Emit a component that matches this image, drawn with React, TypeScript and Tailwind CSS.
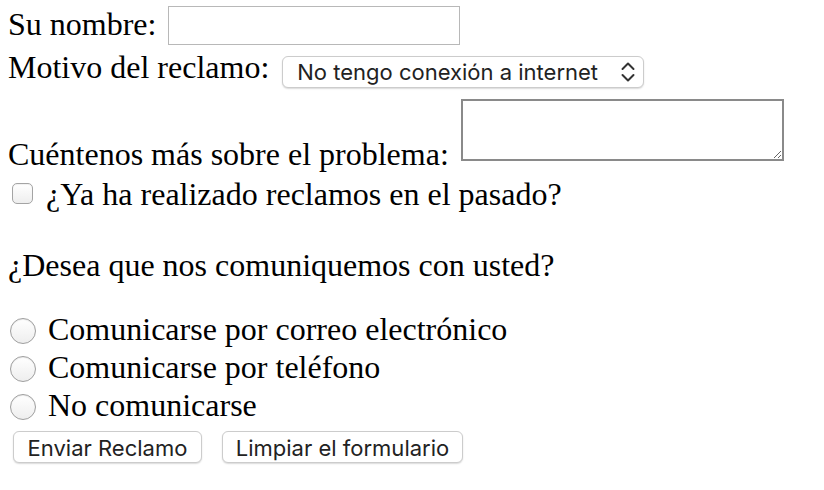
import React from "react";

const serif = "font-['Liberation_Serif','Times_New_Roman',serif] text-[32px] leading-[38px] text-black";
const sans = "font-['Inter','Liberation_Sans',sans-serif] text-[22px] text-[#222]";

function Radio({ label }: { label: string }) {
  return (
    <label className="flex items-start gap-[12px] h-[38px] pl-[2px]">
      <span
        role="radio"
        aria-checked="false"
        className="block mt-[10px] w-[26px] h-[26px] shrink-0 rounded-full border-[1.5px] border-[#9e9e9e] bg-gradient-to-b from-white to-[#eeeeee] shadow-[inset_0_1px_1px_rgba(0,0,0,0.08)]"
      />
      <span className={`${serif} mt-[2px]`}>{label}</span>
    </label>
  );
}

export default function App() {
  return (
    <form className="bg-white w-[824px] h-[490px] pl-[8px] flex flex-col">
      {/* Nombre */}
      <label className="flex items-start gap-[12px] h-[48px]">
        <span className={`${serif} mt-[5px]`}>Su nombre:</span>
        <input
          type="text"
          className="mt-[6px] w-[292px] h-[39px] border border-[#b8b8b8] bg-white outline-none"
        />
      </label>

      {/* Motivo */}
      <label className="flex items-start gap-[13px] h-[48px]">
        <span className={serif}>Motivo del reclamo:</span>
        <div className="mt-[8px] w-[362px] h-[32px] flex items-center justify-between pl-[14px] pr-[7px] bg-white border border-[#cccccc] rounded-[6px] shadow-[0_1px_1.5px_rgba(0,0,0,0.15)]">
          <span className={sans}>No tengo conexión a internet</span>
          <svg className="w-[16px] h-[26px] shrink-0" viewBox="0 0 16 26" fill="none" stroke="#333" strokeWidth="2" strokeLinecap="round" strokeLinejoin="round">
            <path d="M2.5 10 L8 4.5 L13.5 10" />
            <path d="M2.5 16 L8 21.5 L13.5 16" />
          </svg>
        </div>
      </label>

      {/* Problema */}
      <label className="flex items-start gap-[12px] h-[74px]">
        <span className={`${serif} mt-[39px]`}>Cuéntenos más sobre el problema:</span>
        <textarea className="mt-[3px] w-[323px] h-[62px] border-2 border-[#8a8a8a] bg-white outline-none resize" />
      </label>

      {/* Reclamos previos */}
      <label className="flex items-start gap-[13px] h-[45px] pl-[4px]">
        <span
          role="checkbox"
          aria-checked="false"
          className="block mt-[13px] w-[21px] h-[21px] shrink-0 rounded-[5px] border-[1.5px] border-[#a4a4a4] bg-gradient-to-b from-white to-[#eeeeee] shadow-[inset_0_1px_1px_rgba(0,0,0,0.06)]"
        />
        <span className={`${serif} mt-[5px]`}>¿Ya ha realizado reclamos en el pasado?</span>
      </label>

      {/* Pregunta */}
      <div className="h-[93px]">
        <p className={`${serif} mt-[31px]`}>¿Desea que nos comuniquemos con usted?</p>
      </div>

      <Radio label="Comunicarse por correo electrónico" />
      <Radio label="Comunicarse por teléfono" />
      <Radio label="No comunicarse" />

      {/* Botones */}
      <div className="flex items-start gap-[20px] pl-[5px] pt-[9px]">
        <button
          type="submit"
          className={`${sans} w-[189px] h-[32px] bg-white border border-[#cccccc] rounded-[6px] shadow-[0_1px_1.5px_rgba(0,0,0,0.15)]`}
        >
          Enviar Reclamo
        </button>
        <button
          type="reset"
          className={`${sans} w-[241px] h-[32px] bg-white border border-[#cccccc] rounded-[6px] shadow-[0_1px_1.5px_rgba(0,0,0,0.15)]`}
        >
          Limpiar el formulario
        </button>
      </div>
    </form>
  );
}
